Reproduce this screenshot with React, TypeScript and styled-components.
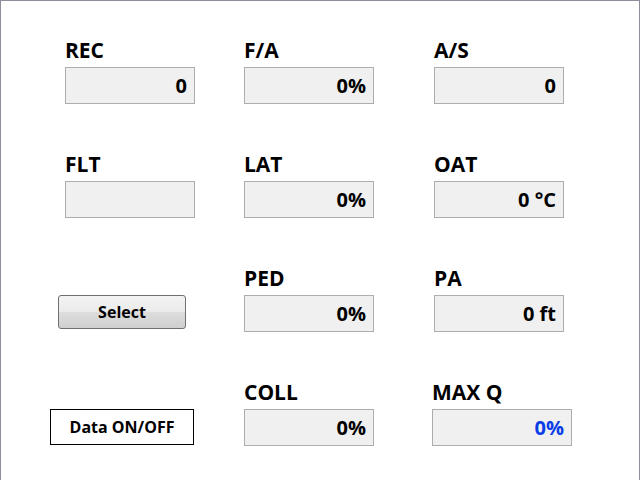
import React from "react";
import styled, { createGlobalStyle } from "styled-components";

const Global = createGlobalStyle`
  html, body { margin: 0; padding: 0; background: #ffffff; }
  * { box-sizing: border-box; }
`;

const Frame = styled.div`
  width: 640px;
  height: 480px;
  border: 1px solid #8c8e9a;
  border-bottom: none;
  background: #ffffff;
  font-family: "Open Sans", "Noto Sans", sans-serif;
  color: #000000;
  padding: 36px 0 0 49px;
`;

const Grid = styled.div`
  display: grid;
  grid-template-columns: 194px 188px 1fr;
  grid-auto-rows: 114px;
`;

const Cell = styled.div<{ $indent: number }>`
  display: flex;
  flex-direction: column;
  padding-left: ${(p) => p.$indent}px;
`;

const Label = styled.div`
  height: 30px;
  line-height: 27px;
  font-size: 21px;
  font-weight: 700;
  white-space: nowrap;
`;

const ValueBox = styled.div<{ $width: number; $color?: string }>`
  width: ${(p) => p.$width}px;
  height: 37px;
  border: 1px solid #adadad;
  background: #f0f0f0;
  text-align: right;
  padding-right: 7px;
  font-size: 20px;
  font-weight: 700;
  line-height: 35px;
  color: ${(p) => p.$color ?? "#000000"};
`;

const SelectButton = styled.button`
  width: 128px;
  height: 34px;
  margin-left: 8px;
  border: 1px solid #707070;
  border-radius: 3px;
  background: linear-gradient(#f3f3f3 0%, #ebebeb 48%, #dddddd 52%, #cfcfcf 100%);
  font-family: "Open Sans", "Noto Sans", sans-serif;
  font-size: 16px;
  font-weight: 700;
  color: #000000;
  padding: 0;
`;

const ToggleButton = styled.button`
  width: 144px;
  height: 36px;
  border: 1px solid #000000;
  background: #ffffff;
  font-family: "Open Sans", "Noto Sans", sans-serif;
  font-size: 16px;
  font-weight: 700;
  color: #000000;
  padding: 0;
`;

type Field = { label: string; value: string; indent: number; width?: number; color?: string };

const Readout = ({ label, value, indent, width = 130, color }: Field) => (
  <Cell $indent={indent}>
    <Label>{label}</Label>
    <ValueBox $width={width} $color={color}>{value}</ValueBox>
  </Cell>
);

export default function App() {
  return (
    <>
      <Global />
      <Frame>
        <Grid>
          <Readout label="REC" value="0" indent={15} />
          <Readout label="F/A" value="0%" indent={0} />
          <Readout label="A/S" value="0" indent={2} />

          <Readout label="FLT" value="" indent={15} />
          <Readout label="LAT" value="0%" indent={0} />
          <Readout label="OAT" value="0 °C" indent={2} />

          <Cell $indent={0}>
            <Label />
            <SelectButton>Select</SelectButton>
          </Cell>
          <Readout label="PED" value="0%" indent={0} />
          <Readout label="PA" value="0 ft" indent={2} />

          <Cell $indent={0}>
            <Label />
            <ToggleButton>Data ON/OFF</ToggleButton>
          </Cell>
          <Readout label="COLL" value="0%" indent={0} />
          <Readout label="MAX Q" value="0%" indent={0} width={140} color="#0a3de6" />
        </Grid>
      </Frame>
    </>
  );
}
